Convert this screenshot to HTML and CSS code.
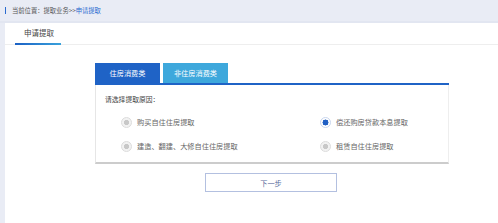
FILE: index.html
```html
<!DOCTYPE html>
<html lang="zh">
<head>
<meta charset="utf-8">
<title>申请提取</title>
<link rel="stylesheet" href="styles.css">
</head>
<body>
<div class="crumb">
  <span class="crumb-bar"></span>
  <span class="crumb-text">当前位置：提取业务&gt;&gt;<span class="crumb-current">申请提取</span></span>
</div>
<div class="panel">
  <div class="panel-tabs">
    <div class="panel-tab">申请提取</div>
  </div>
  <div class="card">
    <div class="card-tabs">
      <div class="card-tab active">住房消费类</div>
      <div class="card-tab other">非住房消费类</div>
    </div>
    <div class="card-body">
      <div class="card-title">请选择提取原因：</div>
      <div class="options">
        <label class="option"><span class="radio"></span><span class="opt-text">购买自住住房提取</span></label>
        <label class="option"><span class="radio checked"></span><span class="opt-text">偿还购房贷款本息提取</span></label>
        <label class="option"><span class="radio"></span><span class="opt-text">建造、翻建、大修自住住房提取</span></label>
        <label class="option"><span class="radio"></span><span class="opt-text">租赁自住住房提取</span></label>
      </div>
    </div>
    <div class="actions">
      <button class="next-btn">下一步</button>
    </div>
  </div>
</div>
</body>
</html>
```
FILE: styles.css
```css
* { box-sizing: border-box; }
html, body { margin: 0; padding: 0; }
body {
  background: #e9ecf5;
  font-family: "Noto Sans CJK SC", "Noto Sans", sans-serif;
  color: #333;
  width: 498px;
  height: 223px;
  overflow: hidden;
}
.crumb {
  height: 23px;
  display: flex;
  align-items: center;
  padding-left: 5px;
  border-bottom: 2px solid #e2e6f1;
}
.crumb-bar {
  width: 1px;
  height: 7px;
  background: #2a6bd0;
  margin-right: 6px;
}
.crumb-text {
  font-size: 6.3px;
  line-height: 10px;
  color: #555;
}
.crumb-current { color: #2a6bd0; }
.panel {
  margin-left: 5px;
  background: #fff;
  height: 200px;
}
.panel-tabs {
  height: 22px;
  border-bottom: 1px solid #eeeeee;
  padding-left: 10px;
  display: flex;
}
.panel-tab {
  width: 46px;
  height: 22px;
  font-size: 7.5px;
  line-height: 20px;
  text-align: center;
  color: #444;
  border-bottom: 2px solid transparent;
  border-image: linear-gradient(90deg, #1a5fc4, #3aa3dc) 1;
  padding-left: 2px;
}
.card {
  margin: 18px 0 0 90px;
  width: 354px;
}
.card-tabs {
  display: flex;
  gap: 3px;
  height: 22px;
  border-bottom: 2px solid #1f63c6;
}
.card-tab {
  width: 65px;
  height: 20px;
  font-size: 7.2px;
  line-height: 20px;
  text-align: center;
  color: #fff;
}
.card-tab.active { background: #1f63c6; }
.card-tab.other { background: #3ea8dc; }
.card-body {
  border-left: 1px solid #e6e6e6;
  border-right: 1px solid #eeeeee;
  border-bottom: 2px solid #cccccc;
  padding: 8px 0 4px 9px;
}
.card-title {
  font-size: 6.8px;
  line-height: 12px;
  color: #444;
}
.options {
  margin-top: 5px;
  display: grid;
  grid-template-columns: 199px 1fr;
  padding-left: 16px;
}
.option {
  height: 24px;
  display: flex;
  align-items: center;
}
.radio {
  width: 11px;
  height: 11px;
  border-radius: 50%;
  border: 1px solid #dcdcdc;
  background: radial-gradient(circle, #c8c8c8 0 2.4px, #f2f2f2 2.9px);
  flex: none;
}
.radio.checked {
  border-color: #c9d6ee;
  background: radial-gradient(circle, #1f5fc4 0 2.8px, #fff 3.2px);
}
.opt-text {
  margin-left: 5px;
  font-size: 7.2px;
  line-height: 12px;
  color: #666;
}
.actions {
  display: flex;
  justify-content: center;
  margin-top: 9px;
}
.next-btn {
  width: 132px;
  height: 19px;
  border: 1px solid #b3c0e0;
  background: #fff;
  font-family: "Noto Sans CJK SC", "Noto Sans", sans-serif;
  font-size: 7.2px;
  color: #5c6b9c;
  padding: 0;
  margin-left: -2px;
}
```
